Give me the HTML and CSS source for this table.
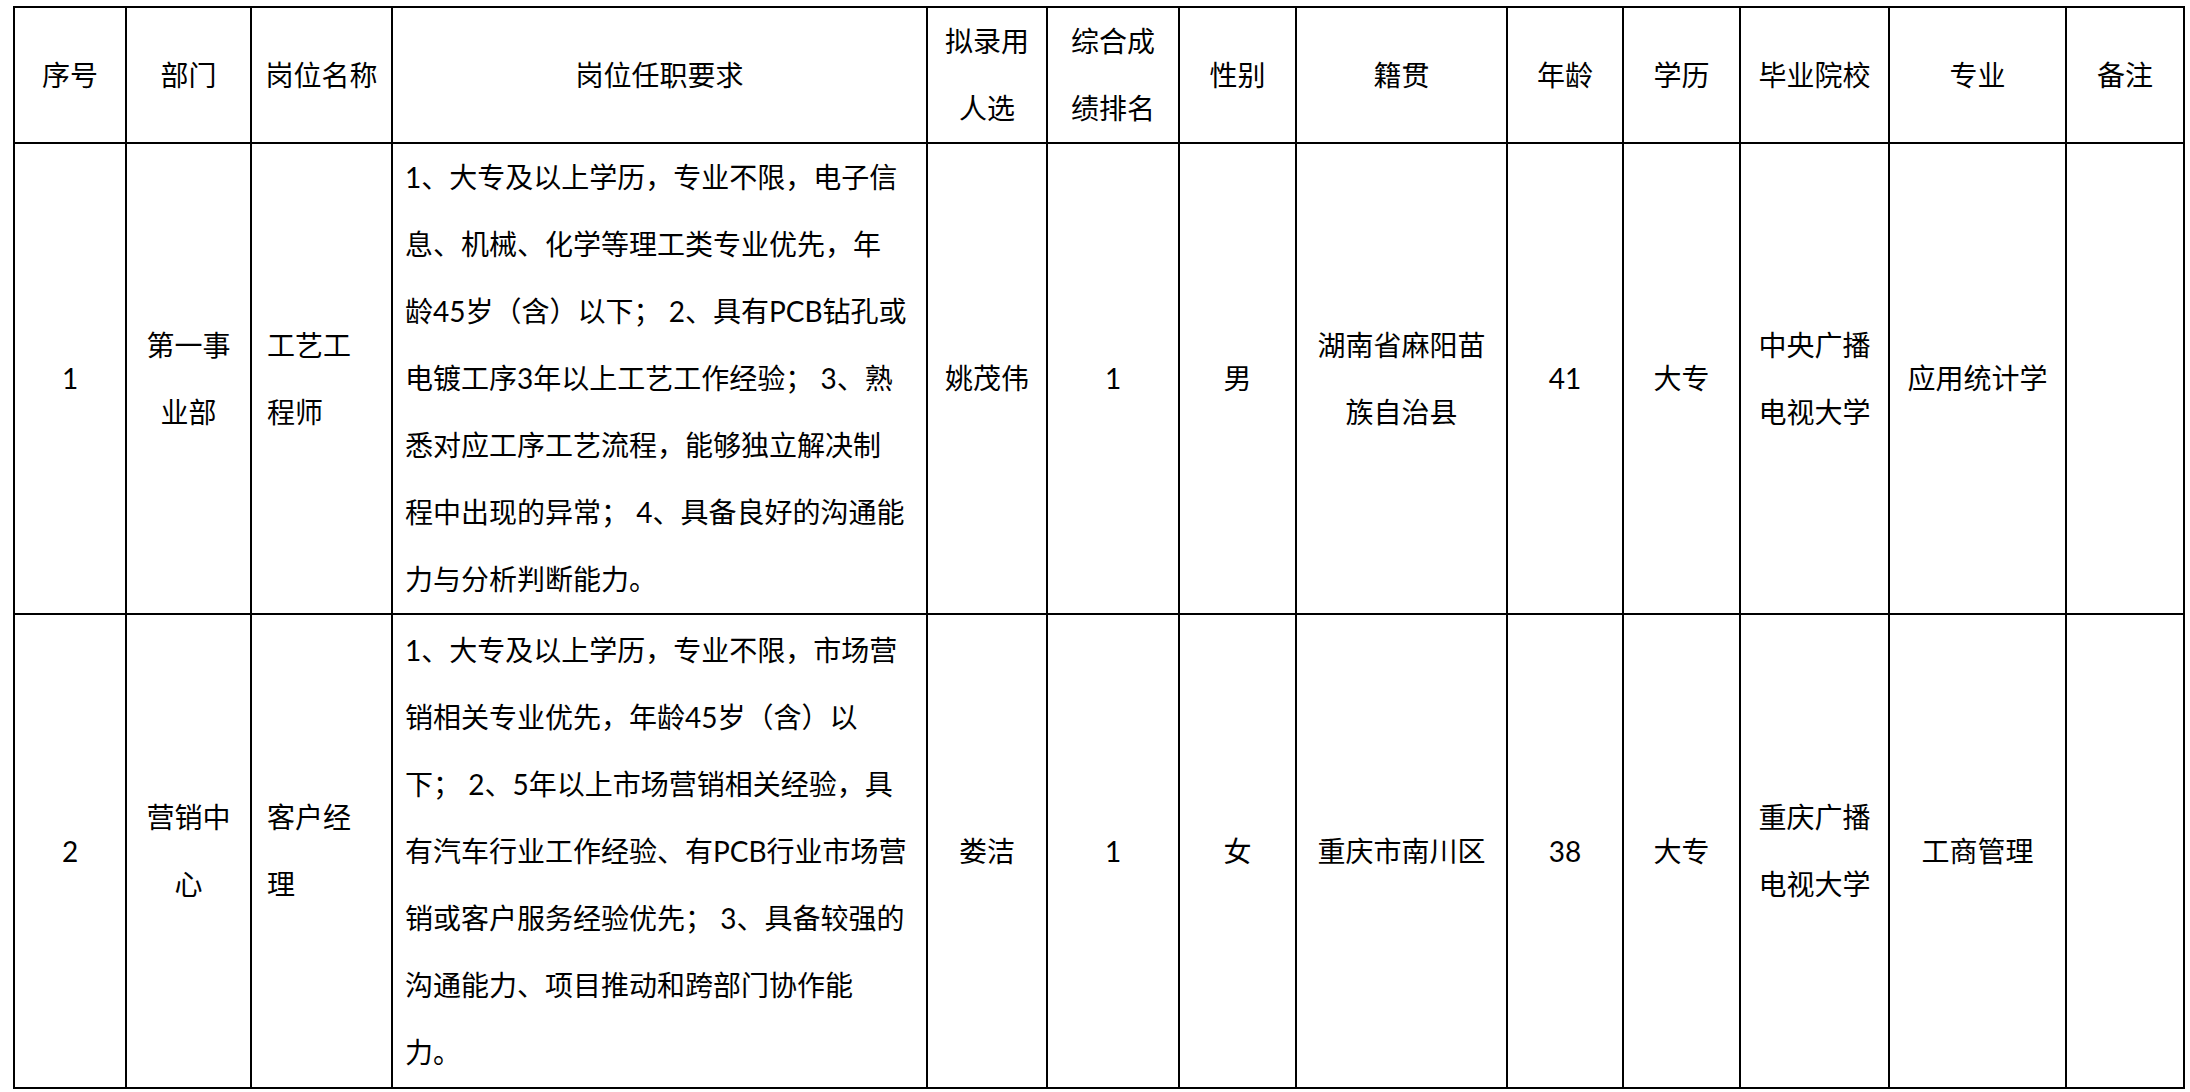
FILE: index.html
```html
<!DOCTYPE html>
<html lang="zh-CN">
<head>
<meta charset="utf-8">
<title>拟录用人员名单</title>
<link rel="stylesheet" href="styles.css">
</head>
<body>
<div class="page">
<table class="roster">
  <colgroup>
    <col class="c-no">
    <col class="c-dept">
    <col class="c-post">
    <col class="c-req">
    <col class="c-name">
    <col class="c-rank">
    <col class="c-sex">
    <col class="c-origin">
    <col class="c-age">
    <col class="c-edu">
    <col class="c-school">
    <col class="c-major">
    <col class="c-note">
  </colgroup>
  <thead>
    <tr class="head">
      <th>序号</th>
      <th>部门</th>
      <th>岗位名称</th>
      <th>岗位任职要求</th>
      <th>拟录用<br>人选</th>
      <th>综合成<br>绩排名</th>
      <th>性别</th>
      <th>籍贯</th>
      <th>年龄</th>
      <th>学历</th>
      <th>毕业院校</th>
      <th>专业</th>
      <th>备注</th>
    </tr>
  </thead>
  <tbody>
    <tr class="row1">
      <td>1</td>
      <td>第一事<br>业部</td>
      <td class="left">工艺工<br>程师</td>
      <td class="req">1、大专及以上学历，专业不限，电子信<br>息、机械、化学等理工类专业优先，年<br>龄45岁（含）以下； 2、具有PCB钻孔或<br>电镀工序3年以上工艺工作经验； 3、熟<br>悉对应工序工艺流程，能够独立解决制<br>程中出现的异常； 4、具备良好的沟通能<br>力与分析判断能力。</td>
      <td>姚茂伟</td>
      <td>1</td>
      <td>男</td>
      <td>湖南省麻阳苗<br>族自治县</td>
      <td>41</td>
      <td>大专</td>
      <td>中央广播<br>电视大学</td>
      <td>应用统计学</td>
      <td></td>
    </tr>
    <tr class="row2">
      <td>2</td>
      <td>营销中<br>心</td>
      <td class="left">客户经<br>理</td>
      <td class="req">1、大专及以上学历，专业不限，市场营<br>销相关专业优先，年龄45岁（含）以<br>下； 2、5年以上市场营销相关经验，具<br>有汽车行业工作经验、有PCB行业市场营<br>销或客户服务经验优先； 3、具备较强的<br>沟通能力、项目推动和跨部门协作能<br>力。</td>
      <td>娄洁</td>
      <td>1</td>
      <td>女</td>
      <td>重庆市南川区</td>
      <td>38</td>
      <td>大专</td>
      <td>重庆广播<br>电视大学</td>
      <td>工商管理</td>
      <td></td>
    </tr>
  </tbody>
</table>
</div>
</body>
</html>
```

FILE: styles.css
```css
html, body {
  margin: 0;
  padding: 0;
  background: #ffffff;
}

.page {
  padding: 6px 0 0 13px;
}

.roster {
  border-collapse: collapse;
  table-layout: fixed;
  width: 2172px;
  font-family: "Lato", "Noto Sans CJK SC", sans-serif;
  font-size: 28px;
  line-height: 67px;
  color: #000000;
}

.roster th,
.roster td {
  border: 2px solid #000000;
  padding: 0 4px;
  text-align: center;
  vertical-align: middle;
  white-space: nowrap;
  font-weight: 400;
}

.c-no { width: 112px; }
.c-dept { width: 125px; }
.c-post { width: 141px; }
.c-req { width: 535px; }
.c-name { width: 120px; }
.c-rank { width: 132px; }
.c-sex { width: 117px; }
.c-origin { width: 211px; }
.c-age { width: 116px; }
.c-edu { width: 117px; }
.c-school { width: 149px; }
.c-major { width: 177px; }
.c-note { width: 118px; }

.head { height: 136px; }
.row1 { height: 471px; }
.row2 { height: 474px; }

.roster td.left {
  text-align: left;
  padding-left: 15px;
}

.roster td.req {
  text-align: left;
  padding-left: 12px;
}
```
